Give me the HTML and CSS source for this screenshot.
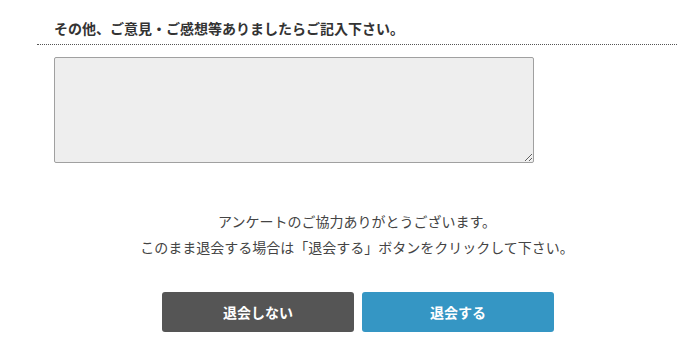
FILE: index.html
```html
<!DOCTYPE html>
<html lang="ja">
<head>
<meta charset="utf-8">
<title>退会アンケート</title>
<link rel="stylesheet" href="styles.css">
</head>
<body>
<div class="page">
  <h2 class="q-title">その他、ご意見・ご感想等ありましたらご記入下さい。</h2>
  <div class="q-body">
    <textarea class="q-text"></textarea>
  </div>
  <div class="message">
    <p>アンケートのご協力ありがとうございます。</p>
    <p>このまま退会する場合は「退会する」ボタンをクリックして下さい。</p>
  </div>
  <div class="actions">
    <button class="btn btn-cancel" type="button">退会しない</button>
    <button class="btn btn-submit" type="button">退会する</button>
  </div>
</div>
</body>
</html>
```
FILE: styles.css
```css
html, body {
  margin: 0;
  padding: 0;
  background: #fff;
}
body {
  font-family: "Noto Sans CJK JP", "Noto Sans", sans-serif;
  color: #333;
}
.page {
  margin-left: 37px;
  width: 640px;
}
.q-title {
  margin: 18px 0 0;
  padding: 0 0 6px 17px;
  font-size: 14px;
  line-height: 20px;
  font-weight: bold;
  color: #333;
  border-bottom: 1px dotted #555;
}
.q-body {
  padding: 12px 0 0 17px;
}
.q-text {
  display: block;
  box-sizing: border-box;
  width: 480px;
  height: 106px;
  margin: 0;
  border: 1px solid #a0a0a0;
  border-radius: 2px;
  background: #eee;
  font-family: inherit;
}
.message {
  margin-top: 45px;
  text-align: center;
  font-size: 14px;
  line-height: 26px;
  color: #444;
}
.message p {
  margin: 0;
}
.actions {
  display: flex;
  justify-content: center;
  gap: 8px;
  margin-top: 32px;
  padding-left: 2px;
}
.btn {
  width: 192px;
  height: 40px;
  border: none;
  border-radius: 3px;
  color: #fff;
  font-family: inherit;
  font-size: 14px;
  font-weight: bold;
  padding: 0;
}
.btn-cancel {
  background: #555;
}
.btn-submit {
  background: #3596c4;
}
```
